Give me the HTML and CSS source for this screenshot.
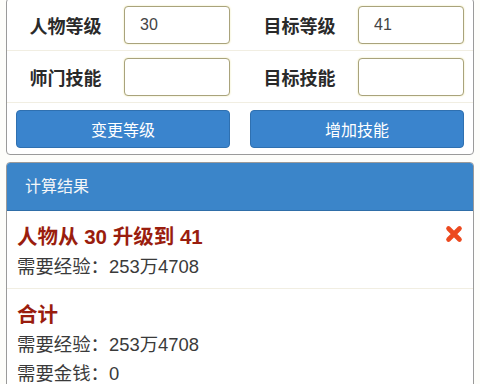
FILE: index.html
```html
<!DOCTYPE html>
<html lang="zh-CN">
<head>
<meta charset="UTF-8">
<meta name="viewport" content="width=device-width, initial-scale=1.0">
<title>等级计算</title>
<link rel="stylesheet" href="styles.css">
</head>
<body>
<div class="form-panel">
    <div class="form-row">
        <div class="field">
            <label>人物等级</label>
            <input type="text" value="30">
        </div>
        <div class="field">
            <label>目标等级</label>
            <input type="text" value="41">
        </div>
    </div>
    <div class="form-row">
        <div class="field">
            <label>师门技能</label>
            <input type="text">
        </div>
        <div class="field">
            <label>目标技能</label>
            <input type="text">
        </div>
    </div>
    <div class="button-row">
        <button class="btn">变更等级</button>
        <button class="btn">增加技能</button>
    </div>
</div>

<div class="result-panel">
    <div class="result-header">计算结果</div>
    <div class="result-item">
        <div class="item-title">人物从 30 升级到 41</div>
        <div class="item-line">需要经验：253万4708</div>
        <svg class="remove" width="18" height="18" viewBox="0 0 18 18">
            <path d="M3.5 3.5 L14.5 14.5 M14.5 3.5 L3.5 14.5" stroke="#ec4a20" stroke-width="4.6" stroke-linecap="round" fill="none"/>
        </svg>
    </div>
    <div class="result-item">
        <div class="item-title">合计</div>
        <div class="item-line">需要经验：253万4708</div>
        <div class="item-line">需要金钱：0</div>
    </div>
</div>
</body>
</html>
```

FILE: styles.css
```css
body {
    margin: 0;
    background-color: #fdfdfa;
    font-family: "Liberation Sans", "Noto Sans CJK SC", sans-serif;
    color: #222;
    overflow: hidden;
}
.form-panel {
    margin: -2px 6px 0 6px;
    border: 1px solid #9a9a9a;
    border-radius: 4px;
    background-color: #fff;
    padding: 0 9px 6px 9px;
}
.form-row {
    display: grid;
    grid-template-columns: 1fr 1fr;
    column-gap: 20px;
    height: 51px;
    border-bottom: 1px solid #f1eee2;
    margin: 0 -9px;
    padding: 0 9px;
}
.field {
    display: flex;
    align-items: center;
}
.field label {
    flex: 1;
    text-align: center;
    padding-right: 9px;
    font-size: 18px;
    font-weight: bold;
    color: #2a2a2a;
}
.field input {
    width: 106px;
    height: 38px;
    box-sizing: border-box;
    border: 1px solid #a9a37c;
    border-radius: 4px;
    box-shadow: 0 0 2px #ece6a8;
    padding: 0 0 0 15px;
    font-family: "Liberation Sans", sans-serif;
    font-size: 16px;
    color: #444;
    background-color: #fff;
}
.button-row {
    display: grid;
    grid-template-columns: 1fr 1fr;
    column-gap: 20px;
    padding-top: 7px;
}
.btn {
    height: 38px;
    border: 1px solid #2f70b0;
    border-radius: 4px;
    background-color: #3a84cd;
    color: #fff;
    font-family: "Liberation Sans", "Noto Sans CJK SC", sans-serif;
    font-size: 16px;
}
.result-panel {
    margin: 7px 6px 0 6px;
    border: 1px solid #9a9a9a;
    border-radius: 4px;
    background-color: #fff;
    overflow: hidden;
}
.result-header {
    height: 47px;
    line-height: 47px;
    padding-left: 18px;
    background-color: #3b85c9;
    border-bottom: 1px solid #2f6ea8;
    color: #f4f6f8;
    font-size: 16px;
}
.result-item {
    position: relative;
    padding: 12px 10px 7px 10px;
    border-bottom: 1px solid #f1eee2;
}
.item-title {
    line-height: 28px;
    margin-bottom: 1px;
    font-size: 20.5px;
    font-weight: bold;
    color: #9a1d0e;
}
.item-line {
    line-height: 29px;
    font-size: 18.4px;
    color: #3a3a3a;
}
.remove {
    position: absolute;
    top: 14px;
    right: 10px;
}
```
